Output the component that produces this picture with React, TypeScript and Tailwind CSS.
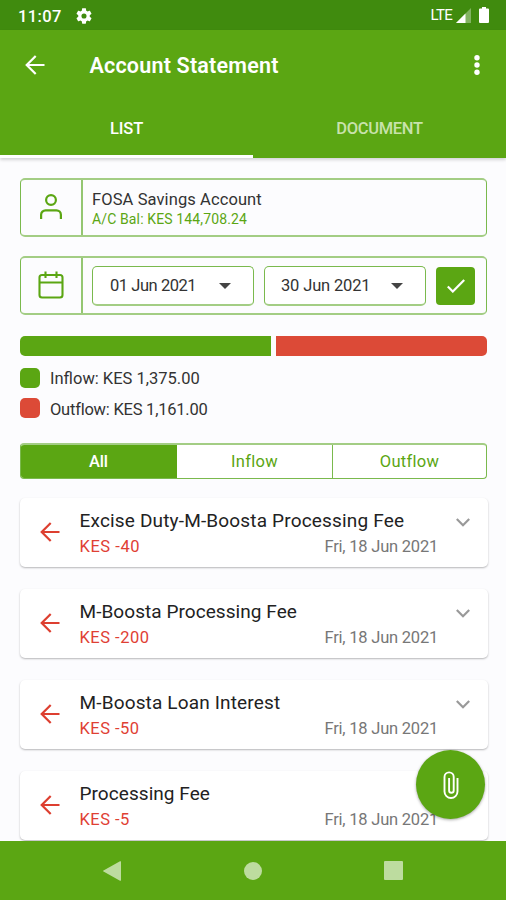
import { clsx } from "clsx";

type Transaction = {
  title: string;
  amount: string;
  date: string;
  titleClass: string;
  amountClass: string;
};

const transactions: Transaction[] = [
  { title: "Excise Duty-M-Boosta Processing Fee", amount: "KES -40", date: "Fri, 18 Jun 2021", titleClass: "tracking-[0.17px]", amountClass: "tracking-[0.55px]" },
  { title: "M-Boosta Processing Fee", amount: "KES -200", date: "Fri, 18 Jun 2021", titleClass: "tracking-[0.06px]", amountClass: "tracking-[0.5px]" },
  { title: "M-Boosta Loan Interest", amount: "KES -50", date: "Fri, 18 Jun 2021", titleClass: "tracking-[0.16px]", amountClass: "tracking-[0.45px]" },
  { title: "Processing Fee", amount: "KES -5", date: "Fri, 18 Jun 2021", titleClass: "tracking-[0.06px]", amountClass: "tracking-[0.45px]" },
];

function ArrowBack({ className }: { className?: string }) {
  return (
    <svg viewBox="0 0 20 20" fill="none" stroke="currentColor" strokeWidth="2.2" className={className}>
      <path d="M19.5 10H2M10.7 1 1.7 10l9 9" />
    </svg>
  );
}

function StatusBar() {
  return (
    <div className="flex h-[30px] items-center bg-[#408b0e] pl-[18px] pr-[17px] text-white">
      <span className="mt-[3px] text-[16.5px] font-medium leading-5 tracking-[0.4px]">11:07</span>
      <svg viewBox="2 2 20 20" fill="currentColor" className="ml-[14px] mt-px size-[16px]">
        <path d="M19.14 12.94c.04-.3.06-.61.06-.94 0-.32-.02-.64-.07-.94l2.03-1.58c.18-.14.23-.41.12-.61l-1.92-3.32c-.12-.22-.37-.29-.59-.22l-2.39.96c-.5-.38-1.03-.7-1.62-.94l-.36-2.54c-.04-.24-.24-.41-.48-.41h-3.84c-.24 0-.43.17-.47.41l-.36 2.54c-.59.24-1.13.57-1.62.94l-2.39-.96c-.22-.08-.47 0-.59.22L2.74 8.87c-.12.21-.08.47.12.61l2.03 1.58c-.05.3-.09.63-.09.94s.02.64.07.94l-2.03 1.58c-.18.14-.23.41-.12.61l1.92 3.32c.12.22.37.29.59.22l2.39-.96c.5.38 1.03.7 1.62.94l.36 2.54c.05.24.24.41.48.41h3.84c.24 0 .44-.17.47-.41l.36-2.54c.59-.24 1.13-.56 1.62-.94l2.39.96c.22.08.47 0 .59-.22l1.92-3.32c.12-.22.07-.47-.12-.61l-2.01-1.58zM12 15.2a3.2 3.2 0 1 1 0-6.4 3.2 3.2 0 0 1 0 6.4z" />
      </svg>
      <span className="ml-auto text-[15px] leading-5 tracking-[-0.7px]">LTE</span>
      <svg viewBox="0 0 15 15" className="ml-[4px] mt-px size-[15px]">
        <path d="M15 0v15H0z" fill="#fff" opacity="0.35" />
        <path d="M9.5 5.5V15H0z" fill="#fff" />
      </svg>
      <svg viewBox="0 0 10 16" fill="currentColor" className="ml-[8px] h-[16px] w-[10px]">
        <path d="M3 0h4v1.6h2a1 1 0 0 1 1 1V15a1 1 0 0 1-1 1H1a1 1 0 0 1-1-1V2.6a1 1 0 0 1 1-1h2z" />
      </svg>
    </div>
  );
}

function Header() {
  return (
    <header className="h-[128px] bg-[#5ba613] text-white shadow-[0_2px_3px_rgba(0,0,0,0.16)]">
      <div className="flex h-[70px] items-center pl-[25px] pr-[26px]">
        <ArrowBack className="-mt-px size-[20px]" />
        <h1 className="ml-[44.5px] mt-[2px] text-[21.5px] font-semibold leading-7 tracking-[0.2px]">Account Statement</h1>
        <svg viewBox="0 0 6 20" fill="currentColor" className="-mt-px ml-auto h-[20px] w-[6px]">
          <circle cx="3" cy="2.7" r="2.7" />
          <circle cx="3" cy="10" r="2.7" />
          <circle cx="3" cy="17.3" r="2.7" />
        </svg>
      </div>
      <div className="flex h-[58px] text-[16.5px] font-medium">
        <div className="flex w-1/2 items-center justify-center border-b-[3px] border-white pt-[3px]">
          <span className="tracking-[-0.1px]">LIST</span>
        </div>
        <div className="flex w-1/2 items-center justify-center text-[#c8e2ab]">
          <span className="tracking-[-0.3px]">DOCUMENT</span>
        </div>
      </div>
    </header>
  );
}

function DateSelect({ value, valueClass }: { value: string; valueClass: string }) {
  return (
    <div className="flex h-[40px] w-[162px] items-center justify-between rounded-[5px] border border-b-2 border-[#7ab94d] border-b-[#a3cd84] bg-white pl-[17px] pr-[22px]">
      <span className={clsx("mt-[3px] text-[16.5px] text-[#333]", valueClass)}>{value}</span>
      <svg viewBox="0 0 12 6" fill="#444" className="mt-px h-[6px] w-[12px]">
        <path d="M0 0h12L6 6z" />
      </svg>
    </div>
  );
}

function TransactionCard({ item }: { item: Transaction }) {
  return (
    <div className="flex h-[69px] rounded-[5px] bg-white pl-[20px] shadow-[0_1px_2px_rgba(0,0,0,0.28)]">
      <ArrowBack className="mt-[24px] size-[20px] text-[#dd3f30]" />
      <div className="ml-[19.5px] w-[358.5px] pt-[10px]">
        <p className={clsx("text-[19px] leading-[26px] whitespace-nowrap text-[#222]", item.titleClass)}>{item.title}</p>
        <div className="flex justify-between text-[16.5px] leading-[26px]">
          <span className={clsx("text-[#df4034]", item.amountClass)}>{item.amount}</span>
          <span className="tracking-[-0.22px] text-[#777]">{item.date}</span>
        </div>
      </div>
      <svg viewBox="0 0 14 9" fill="none" stroke="#999" strokeWidth="2.2" className="ml-[17.5px] mt-[20px] h-[9px] w-[14px]">
        <path d="m.8 1 6.2 6.2L13.2 1" />
      </svg>
    </div>
  );
}

export default function App() {
  return (
    <div className="relative flex h-[900px] w-[506px] flex-col overflow-hidden bg-[#fcfcfe] font-['Roboto','Noto_Sans',sans-serif]">
      <StatusBar />
      <Header />

      <main className="flex h-[683px] flex-col px-[20px] pt-[20px]">
        {/* Account picker */}
        <section className="flex h-[59px] w-[467px] shrink-0 rounded-[5px] border-x border-y-2 border-x-[#7ab94d] border-y-[#a3cd84]">
          <div className="flex w-[62px] items-center justify-center border-r-2 border-[#94c671] text-[#5ba613]">
            <svg viewBox="0 0 22 25" fill="none" stroke="currentColor" strokeWidth="2.2" className="-mt-[2px] h-[25px] w-[22px]">
              <circle cx="11" cy="6" r="4.9" />
              <path d="M1.1 25v-4.2a4.500 4.500 0 0 1 4.500-4.500h10.800a4.500 4.500 0 0 1 4.500 4.500V25" />
            </svg>
          </div>
          <div className="pl-[9px] pt-[10px]">
            <p className="text-[16.5px] leading-5 tracking-[0.1px] text-[#333]">FOSA Savings Account</p>
            <p className="text-[14px] leading-[18px] tracking-[0.13px] text-[#5ba613]">A/C Bal: KES 144,708.24</p>
          </div>
        </section>

        {/* Date range */}
        <section className="mt-[19px] flex h-[59px] w-[467px] shrink-0 rounded-[5px] border-x border-y-2 border-x-[#7ab94d] border-y-[#a3cd84]">
          <div className="flex w-[62px] items-center justify-center border-r-2 border-[#94c671] text-[#5ba613]">
            <svg viewBox="0 0 26 28" fill="none" stroke="currentColor" strokeWidth="2.1" className="-mt-[2px] h-[28px] w-[26px]">
              <rect x="1.5" y="4" width="23" height="22.5" rx="2.5" />
              <path d="M1.5 11.5h23M7.5 .5v6.5M18.5 .5v6.5" />
            </svg>
          </div>
          <div className="flex items-center gap-[10px] pl-[9px]">
            <DateSelect value="01 Jun 2021" valueClass="tracking-[-0.45px]" />
            <DateSelect value="30 Jun 2021" valueClass="-ml-px tracking-[-0.15px]" />
            <button className="flex h-[38px] w-[39px] items-center justify-center rounded-[4px] bg-[#5ba613]">
              <svg viewBox="0 0 18 14" fill="none" stroke="#fff" strokeWidth="2.2" className="h-[14px] w-[18px]">
                <path d="m.8 7.5 5 5L17.2 1" />
              </svg>
            </button>
          </div>
        </section>

        {/* Inflow / outflow split */}
        <div className="mt-[21px] flex h-[20px] w-[467px] shrink-0 gap-[5px]">
          <div className="w-[251px] rounded-l-[5px] bg-[#5ba613]" />
          <div className="flex-1 rounded-r-[5px] bg-[#dc4a37]" />
        </div>
        <div className="mt-[12px] flex flex-col gap-[10px] text-[16.5px] leading-5 text-[#333]">
          <div className="flex h-[20px] items-center gap-[10px]">
            <span className="size-[20px] rounded-[5px] bg-[#5ba613]" />
            <span className="mt-[2px]">Inflow: KES 1,375.00</span>
          </div>
          <div className="flex h-[20px] items-center gap-[10px]">
            <span className="size-[20px] rounded-[5px] bg-[#dc4a37]" />
            <span className="mt-[3px] tracking-[-0.23px]">Outflow: KES 1,161.00</span>
          </div>
        </div>

        {/* Filter */}
        <div className="mt-[25px] flex h-[36px] w-[467px] shrink-0 overflow-hidden rounded-[4px] border border-t-2 border-[#7ab94d] border-t-[#a3cd84] bg-white text-[16.5px] text-[#5ba613]">
          <button className="-mb-px -ml-px -mt-[2px] w-[157px] rounded-l-[4px] bg-[#5ba613] pt-[2px] font-medium tracking-[-0.2px] text-white">All</button>
          <button className="w-[156px] border-r border-[#7ab94d] pt-[2px] tracking-[0.3px]">Inflow</button>
          <button className="flex-1 pt-[2px] tracking-[0.3px]">Outflow</button>
        </div>

        <div className="mt-[19px] flex w-[468px] flex-col gap-[22px]">
          {transactions.map((item) => (
            <TransactionCard key={item.title} item={item} />
          ))}
        </div>
      </main>

      <nav className="relative flex h-[59px] shrink-0 items-center bg-[#5ba613] text-[#bddc9f]">
        <svg viewBox="0 0 18 20" fill="currentColor" className="ml-[103px] h-[20px] w-[18px]">
          <path d="M17 .3a.7.7 0 0 1 1 .7v18a.7.7 0 0 1-1 .7L.5 10.6a.7.7 0 0 1 0-1.2z" />
        </svg>
        <span className="ml-[123px] size-[18px] rounded-full bg-[#bddc9f]" />
        <span className="ml-[122px] size-[19px] rounded-[1px] bg-[#bddc9f]" />
      </nav>

      <button className="absolute left-[416px] top-[750px] flex size-[69px] items-center justify-center rounded-full bg-[#5ba613] shadow-[0_1px_3px_rgba(0,0,0,0.35)]">
        <svg viewBox="0 0 16 28" fill="none" stroke="#fff" strokeWidth="1.9" className="h-[28px] w-[16px]">
          <path d="M14.5 7v13.500a6.500 6.500 0 0 1-13 0V6a4.600 4.600 0 0 1 9.200 0v13.500a2.300 2.300 0 0 1-4.600 0V7" />
        </svg>
      </button>
    </div>
  );
}
